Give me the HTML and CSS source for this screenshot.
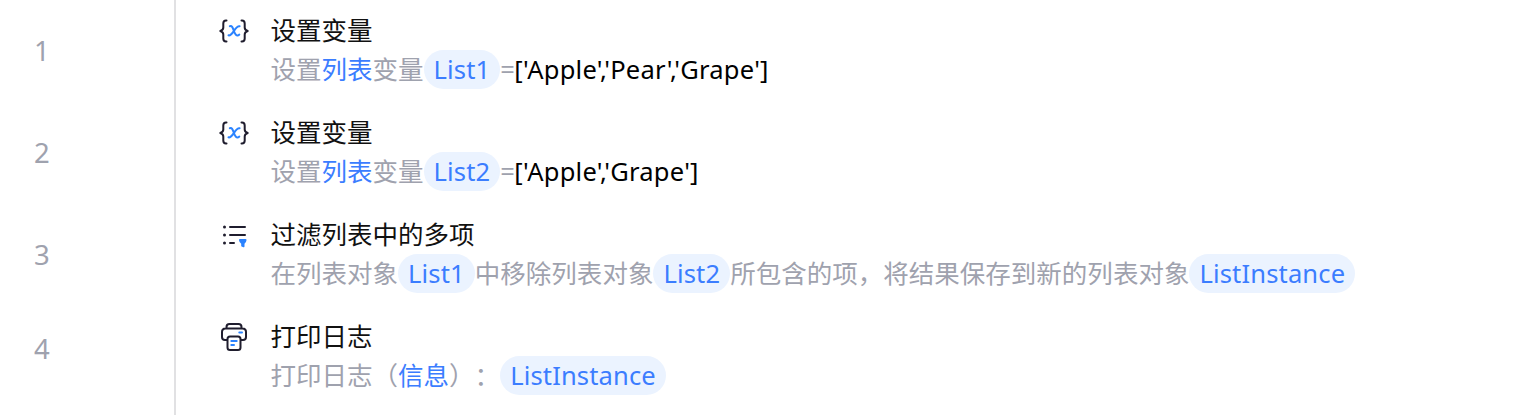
FILE: index.html
```html
<!DOCTYPE html>
<html lang="zh-CN">
<head><meta charset="utf-8"><title>流程</title><link rel="stylesheet" href="styles.css"></head>
<body>
<svg class="defs" aria-hidden="true">
  <symbol id="variable" viewBox="0 0 32 32">
    <path class="ink" d="M8.500 4.500H8Q5.300 4.500 5.300 7.500V11.500Q5.300 14 2.300 15Q5.300 16 5.300 18.500V22.500Q5.300 25.500 8 25.500H8.500M23.500 4.500H24Q26.700 4.500 26.700 7.500V11.500Q26.700 14 29.700 15Q26.700 16 26.700 18.500V22.500Q26.700 25.500 24 25.500H23.500"/>
    <path class="accent" d="M11.800 10.200C16.200 8.500 15.300 20.200 19.800 19.600Q20.800 19.500 21.300 18.600M21.600 10.300C17.500 9 14.500 20.700 10.500 19.300"/>
  </symbol>
  <symbol id="filter" viewBox="0 0 32 32">
    <path class="ink" d="M12 7H27M12 15H27M12 23H16"/>
    <g fill="#1f1d2e"><circle cx="6.500" cy="7" r="1.500"/><circle cx="6.500" cy="15" r="1.500"/><circle cx="6.500" cy="23" r="1.500"/></g>
    <path fill="#2b83ff" d="M22 19H27.500Q28.700 19 28.500 20.200Q28.200 22.500 26.500 23.700V26.300Q26.500 27.700 25.300 27.200L23.200 26.200V23.700Q21.300 22.500 21 20.200Q20.800 19 22 19Z"/>
  </symbol>
  <symbol id="printer" viewBox="0 0 32 32">
    <path class="ink" d="M8.500 6.500V5Q8.500 2 11.500 2H20.500Q23.500 2 23.500 5V6.500M9 18H7Q4 18 4 15V10Q4 6.500 7.500 6.500H24.500Q28 6.500 28 10V15Q28 18 25 18H23"/>
    <rect class="ink" x="9.500" y="14.500" width="13" height="13.500" rx="2.500"/>
    <path class="accent" d="M21.300 10.500H24M13.300 19H18.700M13.300 23H16"/>
  </symbol>
</svg>
<main class="flow">
  <div class="row">
    <div class="num">1</div>
    <div class="icon"><svg><use href="#variable"/></svg></div>
    <div class="body">
      <div class="title">设置变量</div>
      <div class="desc">设置<span class="link">列表</span>变量<span class="chip">List1</span><span class="equals">=</span><span class="value">['Apple'<span class="comma">,</span>'Pear'<span class="comma">,</span>'Grape']</span></div>
    </div>
  </div>
  <div class="row">
    <div class="num">2</div>
    <div class="icon"><svg><use href="#variable"/></svg></div>
    <div class="body">
      <div class="title">设置变量</div>
      <div class="desc">设置<span class="link">列表</span>变量<span class="chip">List2</span><span class="equals">=</span><span class="value">['Apple'<span class="comma">,</span>'Grape']</span></div>
    </div>
  </div>
  <div class="row">
    <div class="num">3</div>
    <div class="icon"><svg><use href="#filter"/></svg></div>
    <div class="body">
      <div class="title">过滤列表中的多项</div>
      <div class="desc">在列表对象<span class="chip">List1</span>中移除列表对象<span class="chip">List2</span>所包含的项，将结果保存到新的列表对象<span class="chip">ListInstance</span></div>
    </div>
  </div>
  <div class="row last">
    <div class="num">4</div>
    <div class="icon"><svg><use href="#printer"/></svg></div>
    <div class="body">
      <div class="title">打印日志</div>
      <div class="desc">打印日志（<span class="link">信息</span>）：<span class="chip">ListInstance</span></div>
    </div>
  </div>
</main>
</body></html>
```
FILE: styles.css
```css
body{margin:0;background:#fff;font-family:"Noto Sans","Noto Sans CJK SC",sans-serif;text-spacing-trim:space-all}
.defs{display:none}
.flow{height:415px;overflow:hidden}
.row{height:102px;display:grid;grid-template-columns:176px 94.500px 1fr}
.row.last{height:109px}
.num{box-sizing:border-box;border-right:2px solid #e1e1e3;padding:30px 0 0 34px;font-size:27.500px;line-height:41px;color:#9fa2ae}
.last .num{padding-top:22px}
.icon{padding:16px 0 0 42px}
.icon svg{display:block;width:32px;height:32px}
.ink{fill:none;stroke:#1f1d2e;stroke-width:2;stroke-linecap:round;stroke-linejoin:round}
.accent{fill:none;stroke:#2b83ff;stroke-width:2;stroke-linecap:round}
.body{padding-top:11px;white-space:nowrap}
.title{font-size:25.500px;line-height:38px;color:#111}
.desc{display:flex;margin-top:1px;font-size:25.530px;line-height:39px;color:#9fa2ae}
.link{color:#3b7dff}
.chip{color:#3b7dff;background:#ebf3ff;border-radius:20px;padding:0 10px;letter-spacing:.15px}
.equals{width:14px}
.value{color:#000;letter-spacing:.25px}
.comma{margin:0 -2.900px}
```
